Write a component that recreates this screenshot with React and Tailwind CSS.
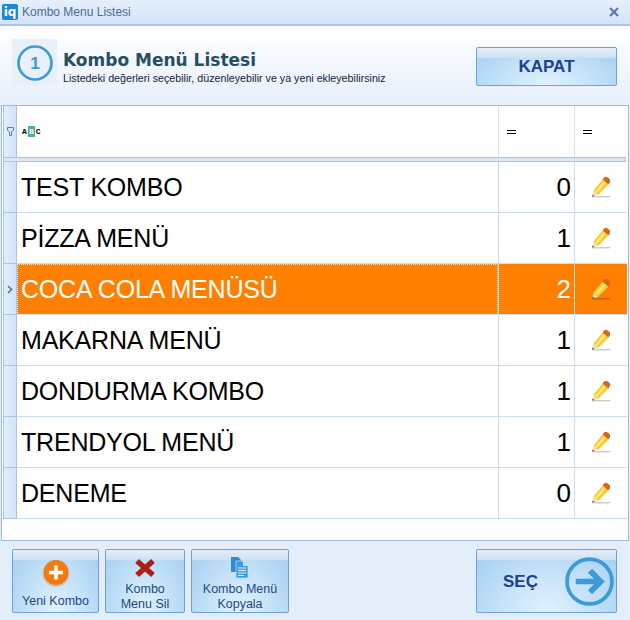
const rows = [
  ["TEST KOMBO", 0],
  ["PİZZA MENÜ", 1],
  ["COCA COLA MENÜSÜ", 2, true],
  ["MAKARNA MENÜ", 1],
  ["DONDURMA KOMBO", 1],
  ["TRENDYOL MENÜ", 1],
  ["DENEME", 0],
];

function Pencil() {
  return (
    <svg width="22" height="24" viewBox="0 0 22 24">
      <path d="M2 21 H21 L19 22.5 H2 Z" fill="#000" opacity="0.2" />
      <path d="M8 20 L2.2 21.6 L3.6 15.4 Z" fill="#f5deb6" />
      <path d="M4.2 21 L2.2 21.6 L2.7 19.6 Z" fill="#3c3c3c" />
      <path d="M3.6 15.4 L12.6 4.6 L18.4 9.4 L8 20 Z" fill="#f6cd2e" />
      <path d="M5.4 16.4 L13.6 6.4 L15.6 8 L7 18 Z" fill="#fde97e" />
      <path d="M12.6 4.6 L14.2 2.4 Q15.6 1.2 17.4 2.2 L19.6 4 Q20.8 5.4 19.8 7.2 L18.4 9.4 Z" fill="#d9641c" />
    </svg>
  );
}

function Circle({ size, children }) {
  return (
    <svg width={size} height={size} viewBox="0 0 48 48">
      <circle cx="24" cy="24" r="22" fill="none" stroke="#3d9ad8" strokeWidth="3.6" />
      {children}
    </svg>
  );
}

function Btn({ className, children }) {
  return (
    <div className={"relative overflow-hidden rounded-[2px] border border-[#6f9fdc] bg-[radial-gradient(ellipse_at_50%_100%,#e2f3fe_0%,#bfdff7_55%,#a3cdf0_100%)] " + className}>
      <div className="absolute inset-x-0 top-0 h-[10px] bg-gradient-to-b from-[#e4eff9] to-[#cfe0f2]" />
      <div className="relative h-full w-full">{children}</div>
    </div>
  );
}

export default function App() {
  return (
    <div className="flex h-[620px] w-[630px] flex-col overflow-hidden bg-[#e4eefa] font-['DejaVu_Sans',sans-serif]">
      <div className="flex h-[26px] shrink-0 items-center border-b-2 border-[#a9c5e8] bg-gradient-to-b from-[#e6f0fb] to-[#d3e3f8] pl-[2px] pr-[11px]">
        <div className="flex h-[16px] w-[16px] items-center justify-center rounded-[2px] bg-[#1b87d8] text-[12px] font-bold leading-none text-white">iq</div>
        <span className="ml-[4px] font-['Liberation_Sans',sans-serif] text-[12px] text-[#4a6a94]">Kombo Menu Listesi</span>
        <svg className="ml-auto" width="10" height="10" viewBox="0 0 10 10">
          <path d="M1 1 L9 9 M9 1 L1 9" stroke="#5c78a6" strokeWidth="2.2" />
        </svg>
      </div>

      <div className="flex h-[79px] shrink-0 bg-gradient-to-b from-[#ffffff] to-[#e6effb] pl-[12px] pr-[13px] pt-[13px]">
        <div className="flex h-[47px] w-[45px] items-center justify-center bg-[#e8f0fa]">
          <Circle size={36}>
            <text x="24" y="32" textAnchor="middle" fontSize="23" fontWeight="700" fill="#3d9ad8" fontFamily="Liberation Sans, sans-serif">1</text>
          </Circle>
        </div>
        <div className="ml-[6px] flex flex-col pt-[11px]">
          <div className="text-[17px] font-bold leading-[20px] text-[#25505f]">Kombo Menü Listesi</div>
          <div className="mt-[1px] font-['Liberation_Sans',sans-serif] text-[10.7px] leading-[14px] text-[#12233a]">Listedeki değerleri seçebilir, düzenleyebilir ve ya yeni ekleyebilirsiniz</div>
        </div>
        <Btn className="ml-auto mt-[8px] h-[39px] w-[141px]">
          <div className="flex h-full items-center justify-center font-['Liberation_Sans',sans-serif] text-[17px] font-bold text-[#1e3f8c]">KAPAT</div>
        </Btn>
      </div>

      <div className="mx-[1px] flex h-[436px] shrink-0 flex-col border border-[#9db9dd] bg-white pl-[1px] pr-[1px]">
        <div className="flex h-[51px] shrink-0 border-l border-[#a9c4e6]">
          <div className="flex w-[13px] items-center justify-center border-r border-[#a9c4e6] bg-gradient-to-r from-[#e2eefb] to-[#d2e4f8]">
            <svg width="7" height="9" viewBox="0 0 7 9">
              <path d="M.5.5 H6.5 V3 L4.5 5 V8.5 H2.5 V5 L.5 3 Z" fill="none" stroke="#5d7ba6" />
            </svg>
          </div>
          <div className="flex flex-1 items-center pl-[5px]">
            <span className="font-['Liberation_Mono',monospace] text-[8px] font-bold leading-[9px] text-black">A</span>
            <span className="mx-[1px] flex h-[11px] w-[7px] items-center justify-center bg-[#52ab8b] font-['Liberation_Mono',monospace] text-[8px] font-bold leading-[9px] text-white">B</span>
            <span className="font-['Liberation_Mono',monospace] text-[8px] font-bold leading-[9px] text-black">C</span>
          </div>
          <div className="flex w-[76px] items-center border-l border-[#d3e2f3] pl-[8px]">
            <div className="h-[4px] w-[9px] border-y border-black" />
          </div>
          <div className="flex w-[53px] items-center border-l border-[#d3e2f3] pl-[8px]">
            <div className="h-[4px] w-[9px] border-y border-black" />
          </div>
        </div>
        <div className="mr-[1px] h-[5px] shrink-0 border border-[#a9c4e6] bg-[#dbe7f6]" />
        <div className="flex flex-col">
          {rows.map(([name, n, sel]) => (
            <div key={name} className="flex h-[51px] border-l border-[#a9c4e6]">
              <div className="flex w-[13px] shrink-0 items-center justify-center border-b border-r border-[#a9c4e6] bg-gradient-to-r from-[#e2eefb] to-[#d2e4f8]">
                {sel && (
                  <svg width="6" height="9" viewBox="0 0 6 9">
                    <path d="M1 1 L4.5 4.5 L1 8" fill="none" stroke="#4f76a8" strokeWidth="1.6" />
                  </svg>
                )}
              </div>
              <div className={"flex flex-1 items-center border-b pl-[4px] pt-[2px] font-['Liberation_Sans',sans-serif] text-[25px] tracking-[-0.2px] " + (sel ? "border-[#c9dcf1] bg-[#ff8000] text-white outline-1 -outline-offset-1 outline-dotted outline-[#ffe9c9]" : "border-[#c9dcf1] text-black")}>
                {name}
              </div>
              <div className={"flex w-[76px] shrink-0 items-center justify-end border-b border-l pr-[3px] font-['Liberation_Sans',sans-serif] text-[26px] " + (sel ? "border-[#c9dcf1] bg-[#ff8000] text-white" : "border-[#c9dcf1] text-black")}>
                {n}
              </div>
              <div className={"flex w-[53px] shrink-0 items-center justify-center border-b border-l border-[#c9dcf1] " + (sel ? "bg-[#ff8000]" : "")}>
                <Pencil />
              </div>
            </div>
          ))}
        </div>
      </div>

      <div className="flex flex-1 items-start pl-[12px] pr-[13px] pt-[8px] font-['Liberation_Sans',sans-serif] text-[12.5px] leading-[15px] text-[#23487c]">
        <Btn className="h-[64px] w-[87px]">
          <div className="flex h-full flex-col items-center pt-[9px]">
            <svg width="28" height="28" viewBox="0 0 28 28">
              <circle cx="14" cy="14.5" r="13.5" fill="#c4c4c4" />
              <circle cx="14" cy="13.5" r="12.5" fill="#f27a10" />
              <path d="M14 6.5 V20.5 M7 13.5 H21" stroke="#fff" strokeWidth="3.6" />
            </svg>
            <span className="mt-[7px]">Yeni Kombo</span>
          </div>
        </Btn>
        <Btn className="ml-[6px] h-[64px] w-[80px]">
          <div className="flex h-full flex-col items-center pt-[7px] text-center">
            <svg width="22" height="21" viewBox="0 0 22 21">
              <path d="M3 4 L11 11 L19 4 M3 18 L11 11 L19 18" fill="none" stroke="#ad1f16" strokeWidth="5.4" />
            </svg>
            <span className="mt-[4px]">Kombo<br />Menu Sil</span>
          </div>
        </Btn>
        <Btn className="ml-[6px] h-[64px] w-[98px]">
          <div className="flex h-full flex-col items-center pt-[6px] text-center">
            <svg width="20" height="22" viewBox="0 0 20 22">
              <path d="M1 1 H8 L11 4 V16 H1 Z" fill="#2f8bdc" />
              <path d="M6 5 H13 L18 10 V22 H6 Z" fill="#3c9ae6" stroke="#e7f2fc" strokeWidth="0.6" />
              <path d="M13 5 V10 H18 Z" fill="#cfe6fa" />
              <path d="M8 12 H16 M8 14.5 H16 M8 17 H16 M8 19.5 H14" stroke="#e7f2fc" strokeWidth="1" />
            </svg>
            <span className="mt-[4px]">Kombo Menü<br />Kopyala</span>
          </div>
        </Btn>
        <Btn className="ml-auto h-[64px] w-[141px]">
          <div className="flex h-full items-center justify-between pl-[26px] pr-[2px]">
            <span className="font-['Liberation_Sans',sans-serif] text-[17px] font-bold text-[#1e3f8c]">SEÇ</span>
            <Circle size={49}>
              <path d="M10.5 24 H34 M24.5 13.5 L35 24 L24.5 34.5" fill="none" stroke="#3d9ad8" strokeWidth="5.6" />
            </Circle>
          </div>
        </Btn>
      </div>
    </div>
  );
}
